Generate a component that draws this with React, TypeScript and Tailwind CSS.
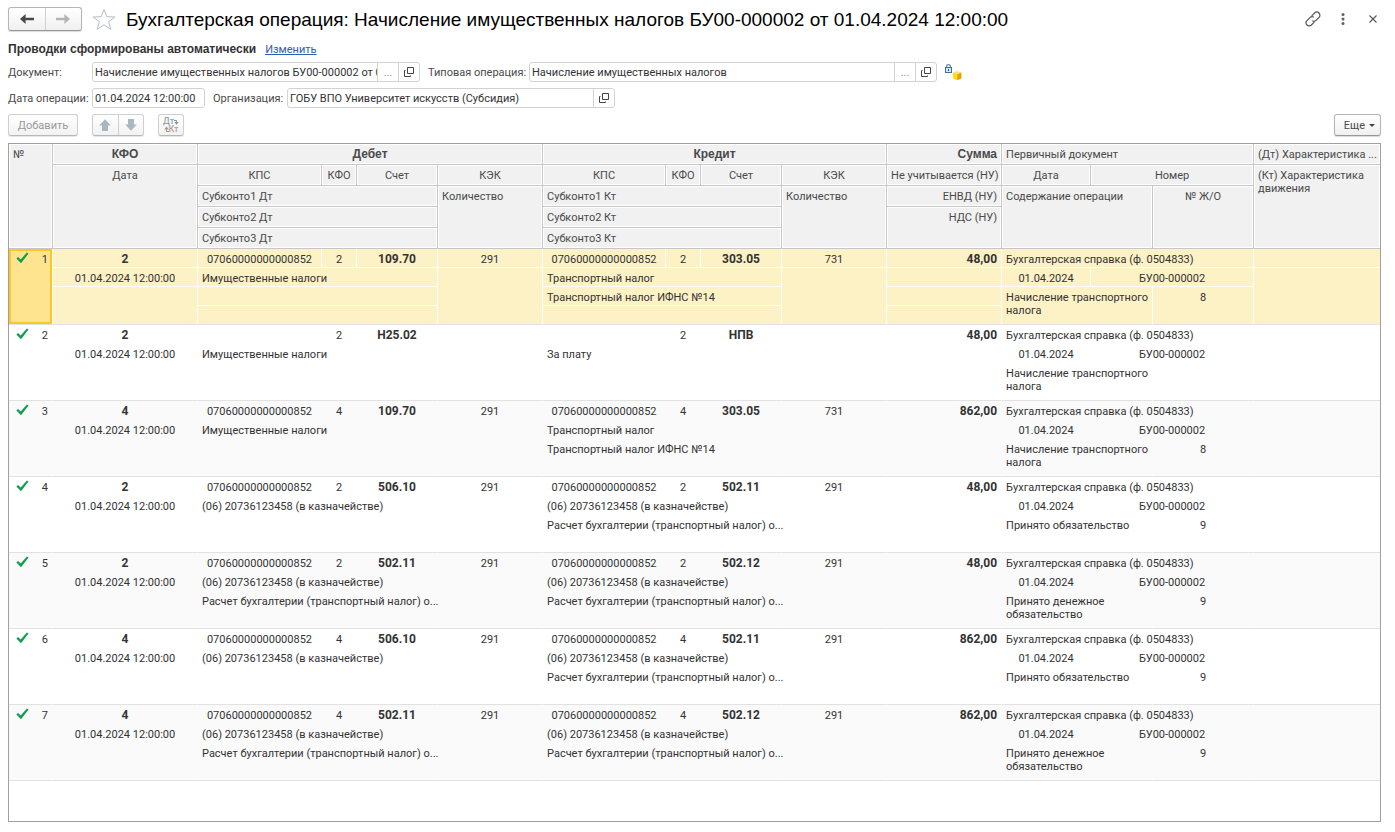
import type { ReactNode } from "react";

type Entry = {
  n: number;
  kfo: string;
  debit: Side;
  credit: Side;
  sum: string;
  content: string;
  journal: string;
};

type Side = {
  kps: string;
  kfo: string;
  account: string;
  kek: string;
  sub: [string, string, string];
};

const KPS = "07060000000000852";
const TREASURY = "(06) 20736123458 (в казначействе)";
const CALC = "Расчет бухгалтерии (транспортный налог) о...";

const side = (kps: string, kfo: string, account: string, kek: string, s1 = "", s2 = "", s3 = ""): Side => ({
  kps,
  kfo,
  account,
  kek,
  sub: [s1, s2, s3],
});

const ENTRIES: Entry[] = [
  {
    n: 1,
    kfo: "2",
    debit: side(KPS, "2", "109.70", "291", "Имущественные налоги"),
    credit: side(KPS, "2", "303.05", "731", "Транспортный налог", "Транспортный налог ИФНС №14"),
    sum: "48,00",
    content: "Начисление транспортного налога",
    journal: "8",
  },
  {
    n: 2,
    kfo: "2",
    debit: side("", "2", "Н25.02", "", "Имущественные налоги"),
    credit: side("", "2", "НПВ", "", "За плату"),
    sum: "48,00",
    content: "Начисление транспортного налога",
    journal: "",
  },
  {
    n: 3,
    kfo: "4",
    debit: side(KPS, "4", "109.70", "291", "Имущественные налоги"),
    credit: side(KPS, "4", "303.05", "731", "Транспортный налог", "Транспортный налог ИФНС №14"),
    sum: "862,00",
    content: "Начисление транспортного налога",
    journal: "8",
  },
  {
    n: 4,
    kfo: "2",
    debit: side(KPS, "2", "506.10", "291", TREASURY),
    credit: side(KPS, "2", "502.11", "291", TREASURY, CALC),
    sum: "48,00",
    content: "Принято обязательство",
    journal: "9",
  },
  {
    n: 5,
    kfo: "2",
    debit: side(KPS, "2", "502.11", "291", TREASURY, CALC),
    credit: side(KPS, "2", "502.12", "291", TREASURY, CALC),
    sum: "48,00",
    content: "Принято денежное обязательство",
    journal: "9",
  },
  {
    n: 6,
    kfo: "4",
    debit: side(KPS, "4", "506.10", "291", TREASURY),
    credit: side(KPS, "4", "502.11", "291", TREASURY, CALC),
    sum: "862,00",
    content: "Принято обязательство",
    journal: "9",
  },
  {
    n: 7,
    kfo: "4",
    debit: side(KPS, "4", "502.11", "291", TREASURY, CALC),
    credit: side(KPS, "4", "502.12", "291", TREASURY, CALC),
    sum: "862,00",
    content: "Принято денежное обязательство",
    journal: "9",
  },
];

const BUTTON =
  "flex items-center justify-center rounded-[3px] border border-[#b5b5b5] border-b-[#989898] bg-linear-to-b from-white to-[#f0f0f0] shadow-[0_1px_1px_#00000026]";
const SOFT_BUTTON =
  "flex items-center justify-center rounded-[3px] border border-[#cfcfcf] border-b-[#b8b8b8] bg-linear-to-b from-white to-[#f2f2f2] shadow-[0_1px_1px_#0000001a]";
const HEAD_BOLD = "font-['Liberation_Sans',Arial,sans-serif] text-xs/[13px] font-bold";

function OpenIcon() {
  return (
    <svg width="10" height="10" viewBox="0 0 10 10" fill="none" stroke="#444" aria-hidden="true">
      <path d="M3.5 0.5h6v6h-6z" />
      <path d="M1.5 3.5h-1v6h6v-1" />
    </svg>
  );
}

function FieldBox({
  id,
  value,
  className,
  choose,
}: {
  id: string;
  value: string;
  className: string;
  choose?: boolean;
}) {
  return (
    <div className={`flex h-5 overflow-hidden rounded-[3px] border border-[#d2d2d2] bg-white ${className}`}>
      <input id={id} defaultValue={value} className="min-w-0 flex-1 pl-0.5 text-[11px] text-[#333] outline-none" />
      {choose && (
        <button
          type="button"
          aria-label="Выбрать"
          className="flex w-[21px] items-center justify-center border-l border-[#d2d2d2] text-[11px] text-[#888]"
        >
          ...
        </button>
      )}
      <button
        type="button"
        aria-label="Открыть"
        className="flex w-[21px] items-center justify-center border-l border-[#d2d2d2]"
      >
        <OpenIcon />
      </button>
    </div>
  );
}

function Th({
  children,
  cols,
  rows,
  className = "text-center font-normal",
}: {
  children?: ReactNode;
  cols?: number;
  rows?: number;
  className?: string;
}) {
  return (
    <th
      colSpan={cols}
      rowSpan={rows}
      className={`h-[21px] border-b border-r border-[#c6c6c6] bg-[#f1f1f1] px-1 pt-1 align-top shadow-[inset_0_0_0_1px_#fff] last:border-r-0 ${className}`}
    >
      {children}
    </th>
  );
}

function Check() {
  return (
    <svg width="13" height="12" viewBox="0 0 13 12" fill="none" aria-label="Проведено" role="img">
      <path d="M0.4 6.4 2 4.9l2.7 2.6L10.9 0.4l1.6 1.2L5 11.2z" fill="#0f9d4e" />
    </svg>
  );
}

function EntryRows({ entry, selected }: { entry: Entry; selected: boolean }) {
  const line = selected ? "border-white" : "border-transparent";
  const base = `h-[19px] border-b border-r px-1 pt-1 align-top last:border-r-0 ${line}`;
  const end = `${base} border-b-[#e2e2e2]`;
  const cut = "whitespace-nowrap";
  const bg = selected ? "bg-[#fdf1c6]" : entry.n % 2 ? "bg-[#fafafa]" : "bg-white";
  const { debit, credit } = entry;
  return (
    <tbody className={bg}>
      <tr>
        <td
          rowSpan={4}
          className={`border-b border-r border-b-[#e2e2e2] align-top ${
            selected ? "border-r-white bg-[#ffe490] shadow-[inset_0_0_0_2px_#f9c828]" : "border-r-transparent"
          }`}
        >
          <div className="flex items-start justify-between pl-[7px] pr-1 pt-[3px]">
            <Check />
            <span className="pt-px">{entry.n}</span>
          </div>
        </td>
        <td className={`${base} text-center text-xs/[13px] font-bold`}>{entry.kfo}</td>
        <td className={`${base} text-center`}>{debit.kps}</td>
        <td className={`${base} text-center`}>{debit.kfo}</td>
        <td className={`${base} text-center text-xs/[13px] font-bold`}>{debit.account}</td>
        <td className={`${base} text-center`}>{debit.kek}</td>
        <td className={`${base} text-center`}>{credit.kps}</td>
        <td className={`${base} text-center`}>{credit.kfo}</td>
        <td className={`${base} text-center text-xs/[13px] font-bold`}>{credit.account}</td>
        <td className={`${base} text-center`}>{credit.kek}</td>
        <td className={`${base} text-right text-xs/[13px] font-bold`}>{entry.sum}</td>
        <td colSpan={3} className={`${base} ${cut}`}>
          Бухгалтерская справка (ф. 0504833)
        </td>
        <td className={base} />
      </tr>
      <tr>
        <td className={`${base} text-center`}>01.04.2024 12:00:00</td>
        <td colSpan={3} className={`${base} ${cut}`}>{debit.sub[0]}</td>
        <td rowSpan={3} className={end} />
        <td colSpan={3} className={`${base} ${cut}`}>{credit.sub[0]}</td>
        <td rowSpan={3} className={end} />
        <td className={base} />
        <td className={`${base} text-center`}>01.04.2024</td>
        <td colSpan={2} className={`${base} text-center`}>БУ00-000002</td>
        <td rowSpan={3} className={end} />
      </tr>
      <tr>
        <td rowSpan={2} className={end} />
        <td colSpan={3} className={`${base} ${cut}`}>{debit.sub[1]}</td>
        <td colSpan={3} className={`${base} ${cut}`}>{credit.sub[1]}</td>
        <td className={base} />
        <td colSpan={2} rowSpan={2} className={end}>{entry.content}</td>
        <td rowSpan={2} className={`h-[19px] border-b border-r border-b-[#e2e2e2] px-1 pt-1 text-center align-top ${line}`}>
          {entry.journal}
        </td>
      </tr>
      <tr>
        <td colSpan={3} className={`${end} ${cut}`}>{debit.sub[2]}</td>
        <td colSpan={3} className={`${end} ${cut}`}>{credit.sub[2]}</td>
        <td className={`h-[19px] border-b border-r border-b-[#e2e2e2] ${line}`} />
      </tr>
    </tbody>
  );
}

function EntriesTable() {
  return (
    <table className="w-full table-fixed border-separate border-spacing-0 text-[11px]/[13px] text-[#333]">
      <colgroup>
        <col className="w-[44px]" />
        <col className="w-[145px]" />
        <col className="w-[124px]" />
        <col className="w-[35px]" />
        <col className="w-[81px]" />
        <col className="w-[105px]" />
        <col className="w-[123px]" />
        <col className="w-[35px]" />
        <col className="w-[81px]" />
        <col className="w-[105px]" />
        <col className="w-[115px]" />
        <col className="w-[89px]" />
        <col className="w-[62px]" />
        <col className="w-[101px]" />
        <col />
      </colgroup>
      <thead className="text-[#4a4a4a]">
        <tr>
          <Th rows={5} className="text-left font-normal">№</Th>
          <Th className={`text-center ${HEAD_BOLD}`}>КФО</Th>
          <Th cols={4} className={`text-center ${HEAD_BOLD}`}>Дебет</Th>
          <Th cols={4} className={`text-center ${HEAD_BOLD}`}>Кредит</Th>
          <Th className={`text-right ${HEAD_BOLD}`}>Сумма</Th>
          <Th cols={3} className="text-left font-normal">Первичный документ</Th>
          <Th className="whitespace-nowrap text-left font-normal">(Дт) Характеристика ...</Th>
        </tr>
        <tr>
          <Th rows={4}>Дата</Th>
          <Th>КПС</Th>
          <Th>КФО</Th>
          <Th>Счет</Th>
          <Th>КЭК</Th>
          <Th>КПС</Th>
          <Th>КФО</Th>
          <Th>Счет</Th>
          <Th>КЭК</Th>
          <Th className="whitespace-nowrap text-right font-normal">Не учитывается (НУ)</Th>
          <Th>Дата</Th>
          <Th cols={2}>Номер</Th>
          <Th rows={4} className="text-left font-normal">(Кт) Характеристика движения</Th>
        </tr>
        <tr>
          <Th cols={3} className="text-left font-normal">Субконто1 Дт</Th>
          <Th rows={3} className="text-left font-normal">Количество</Th>
          <Th cols={3} className="text-left font-normal">Субконто1 Кт</Th>
          <Th rows={3} className="text-left font-normal">Количество</Th>
          <Th className="text-right font-normal">ЕНВД (НУ)</Th>
          <Th cols={2} rows={3} className="text-left font-normal">Содержание операции</Th>
          <Th rows={3} className="border-r! text-center font-normal">№ Ж/О</Th>
        </tr>
        <tr>
          <Th cols={3} className="text-left font-normal">Субконто2 Дт</Th>
          <Th cols={3} className="text-left font-normal">Субконто2 Кт</Th>
          <Th rows={2} className="border-r! text-right font-normal">НДС (НУ)</Th>
        </tr>
        <tr>
          <Th cols={3} className="text-left font-normal">Субконто3 Дт</Th>
          <Th cols={3} className="border-r! text-left font-normal">Субконто3 Кт</Th>
        </tr>
      </thead>
      {ENTRIES.map((entry) => (
        <EntryRows key={entry.n} entry={entry} selected={entry.n === 1} />
      ))}
    </table>
  );
}

export default function App() {
  return (
    <main className="flex min-h-screen flex-col bg-white pb-2.5 pl-2 pr-3.5 pt-[7px] font-['Roboto','Liberation_Sans',sans-serif] text-[11px]/[13px] text-[#4a4a4a]">
      <header className="flex h-6 items-center">
        <div className={`${BUTTON} h-6 w-[74px]`}>
          <button type="button" aria-label="Назад" className="flex h-full flex-1 items-center justify-center">
            <svg width="14" height="10" viewBox="0 0 14 10" aria-hidden="true">
              <path d="M0 5 5.6 0v3.7H14v2.6H5.6V10z" fill="#484848" />
            </svg>
          </button>
          <button
            type="button"
            aria-label="Вперед"
            className="flex h-full flex-1 items-center justify-center border-l border-[#cfcfcf]"
          >
            <svg width="14" height="10" viewBox="0 0 14 10" aria-hidden="true">
              <path d="M14 5 8.4 0v3.7H0v2.6h8.4V10z" fill="#b4b4b4" />
            </svg>
          </button>
        </div>
        <button type="button" aria-label="В избранное" className="ml-2.5">
          <svg width="24" height="23" viewBox="0 0 24 23" fill="none" stroke="#b4bcc4" aria-hidden="true">
            <path d="M12 1.5 14.8 8.7 22.8 9 16.6 13.8 18.9 21.2 12 16.9 5.1 21.2 7.4 13.8 1.2 9 9.2 8.7z" />
          </svg>
        </button>
        <h1 className="ml-2.5 flex-1 whitespace-nowrap pt-0.5 font-['Liberation_Sans',Arial,sans-serif] text-[19px]/6 text-black">
          Бухгалтерская операция: Начисление имущественных налогов БУ00-000002 от 01.04.2024 12:00:00
        </h1>
        <div className="flex items-center">
          <button type="button" aria-label="Ссылка">
            <svg width="16" height="16" viewBox="0 0 16 16" fill="none" stroke="#555" strokeWidth="1.2" strokeLinecap="round" aria-hidden="true">
              <path d="M7 4.6 9.6 2a3 3 0 0 1 4.4 4.4l-3 3a3 3 0 0 1-3.4.6" />
              <path d="M9 11.4 6.4 14A3 3 0 0 1 2 9.6l3-3A3 3 0 0 1 8.4 6" />
            </svg>
          </button>
          <button type="button" aria-label="Меню" className="ml-4 flex w-3 justify-center">
            <svg width="4" height="12" viewBox="0 0 4 12" fill="#606060" aria-hidden="true">
              <circle cx="2" cy="1.6" r="1.5" />
              <circle cx="2" cy="6" r="1.5" />
              <circle cx="2" cy="10.4" r="1.5" />
            </svg>
          </button>
          <button type="button" aria-label="Закрыть" className="ml-5 mr-1">
            <svg width="8" height="8" viewBox="0 0 8 8" stroke="#555" strokeWidth="1.1" aria-hidden="true">
              <path d="M0.5 0.5l7 7M7.5 0.5l-7 7" />
            </svg>
          </button>
        </div>
      </header>

      <div className="mt-3 flex items-center gap-[9px]">
        <strong className={`${HEAD_BOLD} text-[#333]`}>Проводки сформированы автоматически</strong>
        <a href="#edit" className="text-[#2a5db0] underline">
          Изменить
        </a>
      </div>

      <div className="mt-[6px] flex items-center">
        <label htmlFor="document" className="w-[84px]">
          Документ:
        </label>
        <FieldBox id="document" value="Начисление имущественных налогов БУ00-000002 от 01.04.2024 12:00:00" className="w-[328px]" choose />
        <label htmlFor="template" className="w-[109px] whitespace-nowrap pl-2">
          Типовая операция:
        </label>
        <FieldBox id="template" value="Начисление имущественных налогов" className="w-[408px]" choose />
        <svg className="ml-2" width="17" height="17" viewBox="0 0 17 17" role="img" aria-label="Объект заблокирован">
          <path d="M1.6 4V2Q1.6 0.6 3.5 0.6T5.4 2v2" fill="none" stroke="#5b8ca5" strokeWidth="1.2" />
          <rect x="0.5" y="3.5" width="6" height="5" fill="#d6e6ee" stroke="#3c7390" />
          <path d="M3.5 5v2" stroke="#28566f" />
          <path d="M8 8.6 12.2 7 16.4 8.6 12.2 10.2z" fill="#f7e08a" />
          <path d="M8 8.6l4.2 1.6v6L8 14.6z" fill="#ffdc0a" />
          <path d="M16.4 8.6l-4.2 1.6v6l4.2-1.6z" fill="#e0a400" />
        </svg>
      </div>

      <div className="mt-[6px] flex items-center">
        <label htmlFor="date" className="w-[84px] whitespace-nowrap">
          Дата операции:
        </label>
        <input
          id="date"
          defaultValue="01.04.2024 12:00:00"
          className="h-5 w-[113px] rounded-[3px] border border-[#d2d2d2] px-0.5 text-[11px] text-[#333] outline-none"
        />
        <label htmlFor="organization" className="w-[82px] pl-2">
          Организация:
        </label>
        <FieldBox id="organization" value="ГОБУ ВПО Университет искусств (Субсидия)" className="w-[328px]" />
      </div>

      <div className="mb-[7px] mt-[6px] flex items-center">
        <button type="button" className={`${SOFT_BUTTON} h-[22px] w-[70px] text-[#9a9a9a]`}>
          Добавить
        </button>
        <div className={`${SOFT_BUTTON} ml-3.5 h-[22px] w-[52px]`}>
          <button type="button" aria-label="Переместить вверх" className="flex h-full flex-1 items-center justify-center">
            <svg width="12" height="12" viewBox="0 0 12 12" fill="#a9b7c0" aria-hidden="true">
              <path d="M6 0.2 11.8 6.6H9V12H3V6.6H0.2z" />
            </svg>
          </button>
          <button
            type="button"
            aria-label="Переместить вниз"
            className="flex h-full flex-1 items-center justify-center border-l border-[#cfcfcf]"
          >
            <svg width="12" height="12" viewBox="0 0 12 12" fill="#a9b7c0" aria-hidden="true">
              <path d="M6 11.8 11.8 5.4H9V0H3V5.4H0.2z" />
            </svg>
          </button>
        </div>
        <button
          type="button"
          aria-label="Дт Кт"
          className={`${SOFT_BUTTON} ml-3.5 h-[22px] w-[26px] flex-col text-[9px]/[8px] font-medium`}
        >
          <span className="flex items-center text-[#93a5ae]">
            Дт
            <svg width="5" height="7" viewBox="0 0 5 7" aria-hidden="true">
              <path d="M0 2.5h2.5v2" fill="none" stroke="#8395a0" />
              <path d="M0.2 4h4.6L2.5 6.8z" fill="#8395a0" />
            </svg>
          </span>
          <span className="flex items-center text-[#b3a09c]">
            <svg width="5" height="7" viewBox="0 0 5 7" aria-hidden="true">
              <path d="M5 5.5H2.5v-2" fill="none" stroke="#a88f8a" />
              <path d="M0.2 3.4h4.6L2.5 0.6z" fill="#a88f8a" />
            </svg>
            Кт
          </span>
        </button>
        <button type="button" className={`${BUTTON} ml-auto h-[22px] w-[47px] gap-1 pl-1 text-[#4a4a4a]`}>
          Еще
          <svg width="6" height="3" viewBox="0 0 6 3" fill="#444" aria-hidden="true">
            <path d="M0 0h6L3 3z" />
          </svg>
        </button>
      </div>

      <section className="flex-1 border border-[#a0a0a0]">
        <EntriesTable />
      </section>
    </main>
  );
}
